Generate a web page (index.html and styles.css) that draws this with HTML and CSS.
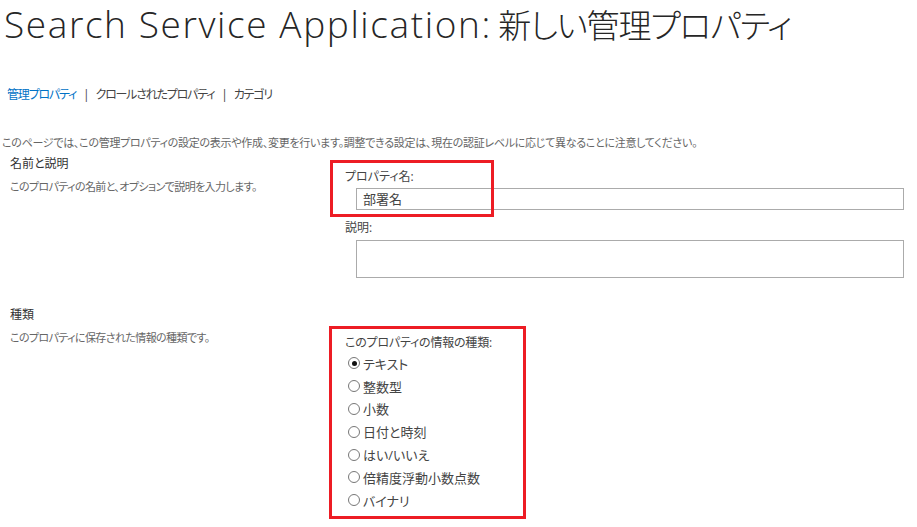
FILE: index.html
```html
<!DOCTYPE html>
<html lang="ja">
<head>
<meta charset="utf-8">
<link rel="stylesheet" href="styles.css">
</head>
<body>
<h1 class="title"><span class="title-en">Search Service Application:</span> <span class="title-ja">新しい管理プロパティ</span></h1>
<nav class="tabs">
  <a class="tab active" href="#">管理プロパティ</a>
  <span class="sep">|</span>
  <a class="tab" href="#">クロールされたプロパティ</a>
  <span class="sep">|</span>
  <a class="tab" href="#">カテゴリ</a>
</nav>
<p class="intro">このページでは、この管理プロパティの設定の表示や作成、変更を行います。調整できる設定は、現在の認証レベルに応じて異なることに注意してください。</p>

<section class="row row-name">
  <div class="side">
    <h2 class="side-head">名前と説明</h2>
    <p class="side-desc">このプロパティの名前と、オプションで説明を入力します。</p>
  </div>
  <div class="main">
    <label class="field-label">プロパティ名:</label>
    <div class="input">部署名</div>
    <label class="field-label label-desc">説明:</label>
    <div class="textarea"></div>
    <div class="mark mark-name"></div>
  </div>
</section>

<section class="row row-type">
  <div class="side">
    <h2 class="side-head">種類</h2>
    <p class="side-desc">このプロパティに保存された情報の種類です。</p>
  </div>
  <div class="main">
    <div class="type-box">
      <div class="field-label type-label">このプロパティの情報の種類:</div>
      <ul class="radios">
        <li><span class="radio checked"></span>テキスト</li>
        <li><span class="radio"></span>整数型</li>
        <li><span class="radio"></span>小数</li>
        <li><span class="radio"></span>日付と時刻</li>
        <li><span class="radio"></span>はい/いいえ</li>
        <li><span class="radio"></span>倍精度浮動小数点数</li>
        <li><span class="radio"></span>バイナリ</li>
      </ul>
    </div>
  </div>
</section>
</body>
</html>
```
FILE: styles.css
```css
html, body {
  margin: 0;
  padding: 0;
  background: #fff;
}
body {
  font-family: "Open Sans", "Noto Sans CJK JP", sans-serif;
  font-feature-settings: "palt";
  color: #444;
  width: 917px;
  height: 527px;
  overflow: hidden;
}
.title {
  margin: -2px 0 0;
  padding: 0 0 0 4px;
  font-size: 36px;
  font-weight: 300;
  line-height: 52px;
  color: #262626;
  white-space: nowrap;
}
.title-en {
  font-size: 37px;
  letter-spacing: 1.6px;
}
.title-ja {
  font-size: 33px;
  letter-spacing: -1.2px;
  margin-left: -3px;
}
.tabs {
  margin: 35px 0 0 7px;
  font-size: 12px;
  line-height: 16px;
  display: flex;
  gap: 7px;
  letter-spacing: -1.2px;
}
.tab {
  color: #444;
  text-decoration: none;
}
.tab.active {
  color: #0072c6;
}
.sep {
  color: #444;
}
.intro {
  margin: 33px 0 0 2px;
  font-size: 11px;
  line-height: 14px;
  color: #666;
  white-space: nowrap;
  letter-spacing: -0.28px;
}
.row {
  display: grid;
  grid-template-columns: 345px 1fr;
}
.side {
  padding-left: 10px;
}
.side-head {
  margin: 0;
  font-size: 12px;
  font-weight: 400;
  line-height: 16px;
  color: #333;
}
.side-desc {
  margin: 8px 0 0;
  font-size: 11px;
  line-height: 14px;
  color: #666;
  letter-spacing: -0.6px;
}
.main {
  position: relative;
  display: flex;
  flex-direction: column;
}
.row-name {
  margin-top: 6px;
}
.row-name .main {
  padding-top: 13px;
}
.field-label {
  font-size: 12px;
  line-height: 16px;
  color: #444;
}
.input {
  margin: 3px 13px 0 11px;
  height: 20px;
  border: 1px solid #ababab;
  font-size: 13px;
  line-height: 20px;
  padding-left: 6px;
  color: #444;
}
.label-desc {
  margin-top: 10px;
}
.textarea {
  margin: 4px 13px 0 11px;
  height: 36px;
  border: 1px solid #ababab;
}
.mark {
  position: absolute;
  border: 3px solid #ed1c24;
}
.mark-name {
  left: -15px;
  top: 4px;
  width: 158px;
  height: 51px;
}
.row-type {
  margin-top: 29px;
}
.type-box {
  margin: 19px 0 0 -16px;
  width: 178px;
  border: 3px solid #ed1c24;
  padding: 6px 0 4px 13px;
}
.type-label {
  margin: 0;
  letter-spacing: -0.2px;
}
.radios {
  list-style: none;
  margin: 1px 0 0;
  padding: 0 0 0 3px;
}
.radios li {
  display: flex;
  align-items: center;
  height: 22.8px;
  font-size: 13px;
  color: #444;
}
.radio {
  width: 12px;
  height: 12px;
  border: 1px solid #777;
  border-radius: 50%;
  margin-right: 3px;
  position: relative;
  box-sizing: border-box;
  flex: none;
}
.radio.checked::after {
  content: "";
  position: absolute;
  left: 2.5px;
  top: 2.5px;
  width: 5px;
  height: 5px;
  border-radius: 50%;
  background: #111;
}
```
